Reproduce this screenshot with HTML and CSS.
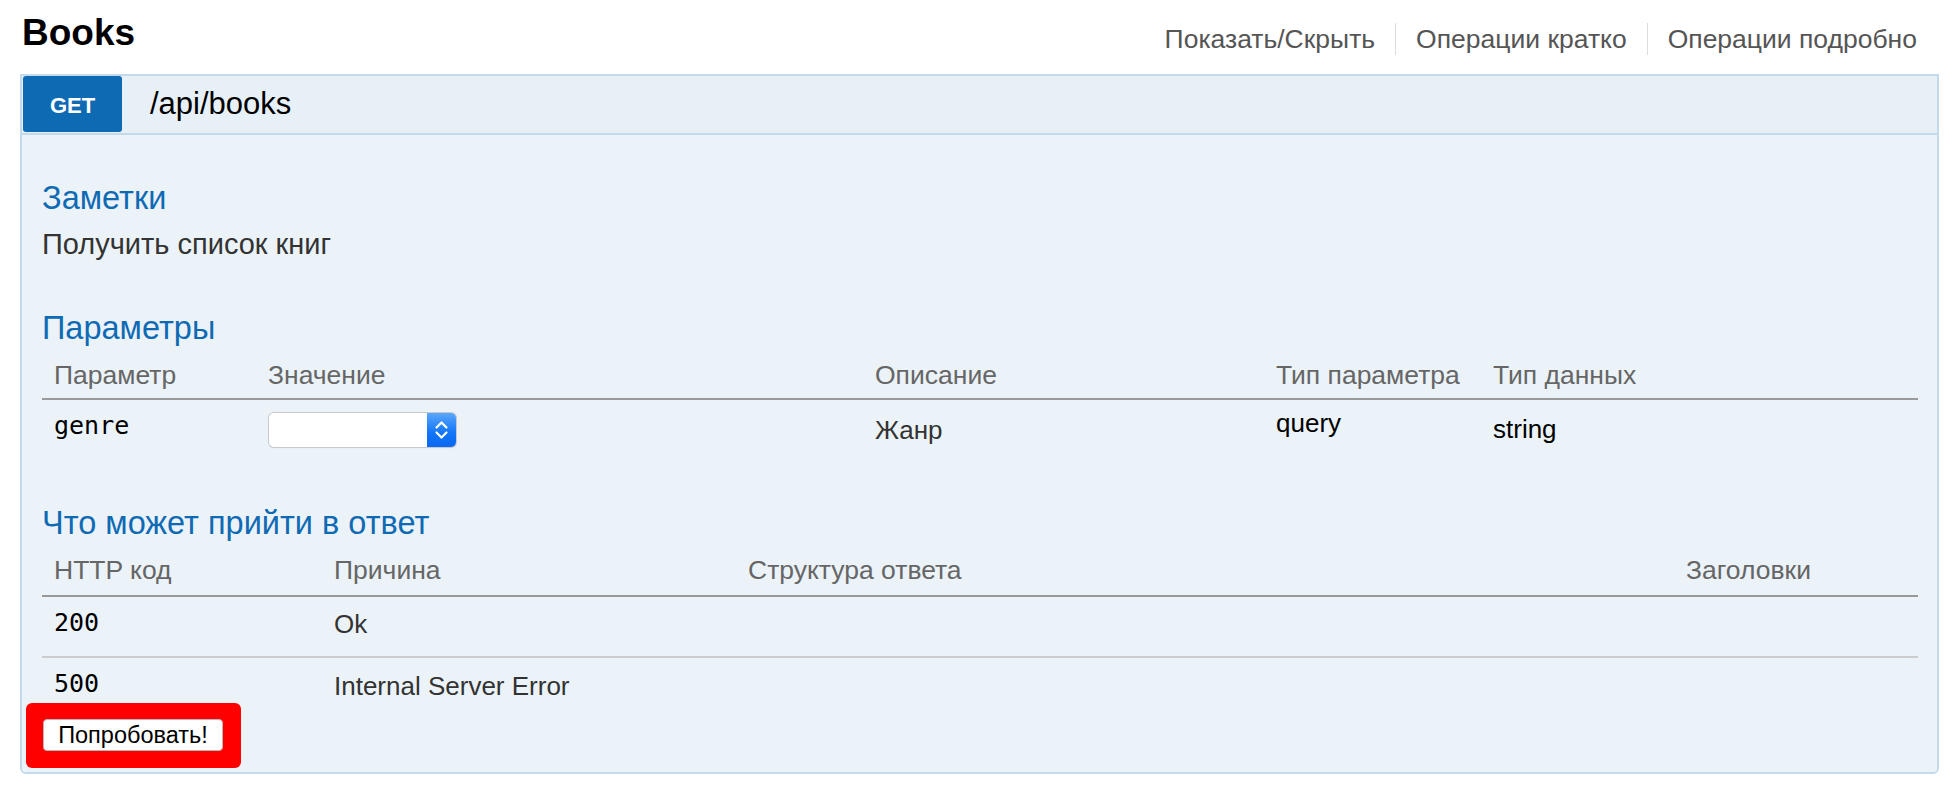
FILE: index.html
```html
<!DOCTYPE html>
<html lang="ru">
<head>
<meta charset="utf-8">
<title>Books</title>
<link rel="stylesheet" href="styles.css">
</head>
<body>
<header class="top">
  <h2 class="title">Books</h2>
  <nav class="links">
    <a class="link" href="#">Показать/Скрыть</a>
    <a class="link" href="#">Операции кратко</a>
    <a class="link" href="#">Операции подробно</a>
  </nav>
</header>
<section class="op">
  <div class="op-head">
    <span class="method">GET</span>
    <span class="path">/api/books</span>
  </div>
  <div class="op-body">
    <h4 class="sec-title notes-title">Заметки</h4>
    <p class="notes">Получить список книг</p>

    <h4 class="sec-title params-title">Параметры</h4>
    <div class="table params">
      <div class="row head">
        <div class="cell">Параметр</div>
        <div class="cell">Значение</div>
        <div class="cell">Описание</div>
        <div class="cell">Тип параметра</div>
        <div class="cell">Тип данных</div>
      </div>
      <div class="row param-row">
        <div class="cell mono p11">genre</div>
        <div class="cell p13">
          <div class="select">
            <span class="select-field"></span>
            <span class="select-arrows">
              <svg width="29" height="34" viewBox="0 0 29 34"><path d="M9.5 14.5 L14.5 9.5 L19.5 14.5 M9.5 19.5 L14.5 24.5 L19.5 19.5" fill="none" stroke="#fff" stroke-width="2.2" stroke-linecap="round" stroke-linejoin="round"/></svg>
            </span>
          </div>
        </div>
        <div class="cell text p15">Жанр</div>
        <div class="cell text dark p8">query</div>
        <div class="cell text dark p14">string</div>
      </div>
    </div>

    <h4 class="sec-title resp-title">Что может прийти в ответ</h4>
    <div class="table responses">
      <div class="row head">
        <div class="cell">HTTP код</div>
        <div class="cell">Причина</div>
        <div class="cell">Структура ответа</div>
        <div class="cell">Заголовки</div>
      </div>
      <div class="row resp-row first-resp">
        <div class="cell mono p11">200</div>
        <div class="cell text p12">Ok</div>
        <div class="cell"></div>
        <div class="cell"></div>
      </div>
      <div class="row resp-row last-resp">
        <div class="cell mono p11">500</div>
        <div class="cell text p13">Internal Server Error</div>
        <div class="cell"></div>
        <div class="cell"></div>
      </div>
    </div>

    <div class="highlight">
      <button class="try" type="button">Попробовать!</button>
    </div>
  </div>
</section>
</body>
</html>
```

FILE: styles.css
```css
* { box-sizing: border-box; }

body {
  margin: 0;
  background: #fff;
  font-family: "Liberation Sans", Arial, Helvetica, sans-serif;
  color: #333;
}

.top {
  display: flex;
  justify-content: space-between;
  align-items: flex-start;
  height: 74px;
  padding: 0 35px 0 20px;
}

.title {
  margin: 13px 0 0 2px;
  font-size: 37px;
  line-height: 40px;
  font-weight: 700;
  color: #000;
}

.links {
  display: flex;
  margin-top: 23px;
}

.link {
  font-size: 26.5px;
  line-height: 32px;
  color: #555;
  text-decoration: none;
  padding: 0 20px;
  border-left: 1px solid #ddd;
}

.link:first-child { border-left: none; padding-left: 0; }
.link:last-child { padding-right: 0; }

.op {
  margin: 0 13px 0 20px;
  border: 2px solid #c3d9ec;
  border-radius: 0 0 6px 6px;
  overflow: hidden;
}

.op-head {
  display: flex;
  align-items: flex-start;
  height: 59px;
  background: #e7f0f7;
  border-bottom: 2px solid #c3d9ec;
}

.method {
  display: flex;
  align-items: center;
  justify-content: center;
  width: 99px;
  height: 56px;
  margin-left: 1px;
  padding-top: 4px;
  background: #0f6ab4;
  border-radius: 3px;
  color: #fff;
  font-size: 22px;
  font-weight: 700;
}

.path {
  margin-left: 28px;
  font-size: 31px;
  line-height: 56px;
  color: #000;
}

.op-body {
  display: flow-root;
  background: #ebf3f9;
  padding: 0 19px 4px 20px;
}

.sec-title {
  margin: 0;
  font-size: 32.5px;
  line-height: 36px;
  font-weight: 400;
  color: #0f6ab4;
}

.notes-title { margin-top: 45px; }
.params-title { margin-top: 50px; }
.resp-title { margin-top: 47px; }

.notes {
  margin: 12px 0 0;
  font-size: 29px;
  line-height: 32px;
  color: #333;
}

.table { width: 100%; }

.row { display: grid; }

.params .row { grid-template-columns: 214px 607px 401px 217px 1fr; }
.responses .row { grid-template-columns: 280px 414px 938px 1fr; }

.cell { padding: 0 12px; }

.head {
  margin-top: 14px;
  border-bottom: 2px solid #999;
}

.params .head { padding-bottom: 8px; }
.responses .head { padding-bottom: 10px; }

.head .cell {
  font-size: 26.5px;
  line-height: 30px;
  color: #666;
  white-space: nowrap;
}

.param-row { height: 58px; }

.first-resp {
  height: 61px;
  border-bottom: 2px solid #ccc;
}

.last-resp { height: 45px; }

.mono {
  font-family: "DejaVu Sans Mono", "Liberation Mono", monospace;
  font-size: 25px;
  line-height: 30px;
  color: #000;
}

.text {
  font-size: 26px;
  line-height: 30px;
  color: #333;
}

.dark { color: #000; }

.p8 { padding-top: 8px; }
.p11 { padding-top: 11px; }
.p12 { padding-top: 12px; }
.p13 { padding-top: 13px; }
.p14 { padding-top: 14px; }
.p15 { padding-top: 15px; }

.select {
  display: flex;
  width: 187px;
  height: 34px;
  border-radius: 5px;
  box-shadow: 0 0 0 1px #c6c9cd, 0 1px 1px rgba(0, 0, 0, 0.18);
  overflow: hidden;
  margin-left: 1px;
}

.select-field {
  flex: 1;
  background: #fff;
}

.select-arrows {
  display: flex;
  width: 29px;
  height: 34px;
  background: linear-gradient(#5aa6fb, #1174f6 60%, #0a68f3);
}

.highlight {
  display: flex;
  width: 215px;
  margin-left: -16px;
  padding: 16px 18px 17px 17px;
  background: #ff0000;
  border-radius: 6px;
}

.try {
  width: 180px;
  height: 32px;
  margin: 0;
  padding: 0;
  background: #fff;
  border: 1px solid #b5b5b5;
  border-radius: 4px;
  font-family: "Liberation Sans", Arial, sans-serif;
  font-size: 23.5px;
  color: #000;
}
```
